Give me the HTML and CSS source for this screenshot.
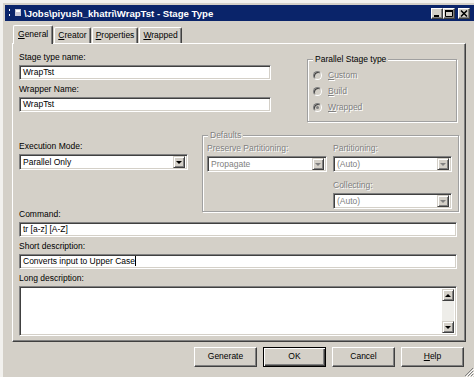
FILE: index.html
```html
<!DOCTYPE html>
<html lang="en">
<head>
    <meta charset="UTF-8">
    <meta name="viewport" content="width=device-width, initial-scale=1.0">
    <title>Stage Type</title>
    <link rel="stylesheet" href="styles.css">
</head>
<body>
<div class="window">
    <div class="titlebar">
        <svg class="app-icon" width="13" height="10" viewBox="0 0 13 10">
            <rect x="1" y="1" width="1" height="2" fill="#fff"/>
            <rect x="1" y="6" width="1" height="2" fill="#fff"/>
            <rect x="7" y="1" width="6" height="7" fill="#c8c8d8"/>
            <rect x="8" y="2" width="4" height="2" fill="#fff"/>
        </svg>
        <span class="title">\Jobs\piyush_khatri\WrapTst - Stage Type</span>
        <div class="caption-buttons">
            <span class="cap-btn">
                <svg width="10" height="9" viewBox="0 0 10 9"><rect x="2" y="6" width="5" height="2" fill="#000"/></svg>
            </span>
            <span class="cap-btn">
                <svg width="10" height="9" viewBox="0 0 10 9"><path d="M1.5 1.5h7v6h-7z" fill="none" stroke="#000"/><rect x="1" y="1" width="8" height="2" fill="#000"/></svg>
            </span>
            <span class="cap-btn close">
                <svg width="10" height="9" viewBox="0 0 10 9"><path d="M2 1.5l6 6M8 1.5l-6 6" stroke="#000" stroke-width="1.6"/></svg>
            </span>
        </div>
    </div>

    <div class="dialog">
        <div class="tabs">
            <div class="tab active"><u>G</u>eneral</div>
            <div class="tab"><u>C</u>reator</div>
            <div class="tab"><u>P</u>roperties</div>
            <div class="tab"><u>W</u>rapped</div>
        </div>

        <div class="panel">
            <div class="top-row">
                <div class="names">
                    <div class="label">Stage type name:</div>
                    <div class="field">WrapTst</div>
                    <div class="label">Wrapper Name:</div>
                    <div class="field">WrapTst</div>
                </div>
                <div class="group stage-type">
                    <span class="legend">Parallel Stage type</span>
                    <div class="radio"><span class="mark"></span><span class="off"><u>C</u>ustom</span></div>
                    <div class="radio"><span class="mark"></span><span class="off"><u>B</u>uild</span></div>
                    <div class="radio"><span class="mark checked"></span><span class="off"><u>W</u>rapped</span></div>
                </div>
            </div>

            <div class="mid-row">
                <div class="exec">
                    <div class="label">Execution Mode:</div>
                    <div class="select">
                        <span class="value">Parallel Only</span>
                        <span class="drop"></span>
                    </div>
                </div>
                <div class="group defaults">
                    <span class="legend off">Defaults</span>
                    <div class="defaults-grid">
                        <div>
                            <div class="label off">Preserve Partitioning:</div>
                            <div class="select disabled">
                                <span class="value">Propagate</span>
                                <span class="drop"></span>
                            </div>
                        </div>
                        <div>
                            <div class="label off">Partitioning:</div>
                            <div class="select disabled">
                                <span class="value">(Auto)</span>
                                <span class="drop"></span>
                            </div>
                        </div>
                        <div></div>
                        <div>
                            <div class="label off">Collecting:</div>
                            <div class="select disabled">
                                <span class="value">(Auto)</span>
                                <span class="drop"></span>
                            </div>
                        </div>
                    </div>
                </div>
            </div>

            <div class="label cmd-label">Command:</div>
            <div class="field">tr [a-z] [A-Z]</div>
            <div class="label">Short description:</div>
            <div class="field">Converts input to Upper Case<span class="caret"></span></div>
            <div class="label">Long description:</div>
            <div class="textarea">
                <div class="scrollbar">
                    <span class="sb-btn up"></span>
                    <span class="sb-track"></span>
                    <span class="sb-btn down"></span>
                </div>
            </div>
        </div>

        <div class="buttons">
            <div class="btn">Generate</div>
            <div class="btn default">OK</div>
            <div class="btn">Cancel</div>
            <div class="btn"><u>H</u>elp</div>
        </div>
    </div>

    <svg class="grip" width="10" height="10" viewBox="0 0 10 10">
        <path d="M9 1L1 9M9 4L4 9M9 7L7 9" stroke="#808080" stroke-width="1"/>
        <path d="M10 2L2 10M10 5L5 10M10 8L8 10" stroke="#fff" stroke-width="1"/>
    </svg>
</div>
</body>
</html>
```

FILE: styles.css
```css
html, body {
    margin: 0;
    height: 100%;
}
body {
    background: #d4d0c8;
    font-family: "Liberation Sans", Arial, sans-serif;
    font-size: 8.5px;
    color: #000;
    overflow: hidden;
}
u {
    text-decoration: underline;
    text-underline-offset: 1px;
}
.window {
    position: relative;
    height: 100%;
    box-sizing: border-box;
    border-left: 3px solid #f2f1ee;
    border-top: 3px solid #f2f1ee;
    padding: 2px 0 0 2px;
}

/* title bar */
.titlebar {
    height: 16px;
    background: #0a246a;
    display: flex;
    align-items: center;
    padding-left: 3px;
}
.app-icon {
    margin-right: 3px;
}
.title {
    color: #fff;
    font-weight: bold;
    font-size: 9.6px;
    white-space: nowrap;
}
.caption-buttons {
    margin-left: auto;
    display: flex;
    margin-right: 4px;
}
.cap-btn {
    width: 12px;
    height: 11px;
    box-sizing: border-box;
    background: #d4d0c8;
    border: 1px solid;
    border-color: #fff #404040 #404040 #fff;
    box-shadow: inset -1px -1px 0 #808080;
    display: flex;
    align-items: center;
    justify-content: center;
}
.cap-btn svg {
    display: block;
}
.cap-btn.close {
    margin-left: 3px;
}

/* dialog body */
.dialog {
    padding: 4px 8px 0 7px;
}
.tabs {
    display: flex;
    align-items: flex-end;
    height: 18px;
    padding-left: 1px;
    position: relative;
    z-index: 1;
}
.tab {
    height: 16px;
    box-sizing: border-box;
    padding: 0 3px;
    line-height: 14px;
    border: 1px solid;
    border-color: #fff #404040 transparent #fff;
    border-bottom: none;
    box-shadow: inset -1px 0 0 #808080;
    border-radius: 2px 2px 0 0;
    margin-left: 1px;
    white-space: nowrap;
}
.tab.active {
    height: 19px;
    margin-bottom: -1px;
    margin-left: 0;
    padding: 0 4px;
    background: #d4d0c8;
    line-height: 16px;
}
.panel {
    border: 1px solid;
    border-color: #fff #404040 #404040 #fff;
    box-shadow: inset -1px -1px 0 #808080;
    padding: 8px 8px 5px 6px;
}

.label {
    line-height: 11px;
    height: 11px;
    margin-bottom: 2px;
    white-space: nowrap;
}
.off {
    color: #808080;
    text-shadow: 1px 1px 0 #fff;
}

.field,
.select,
.textarea {
    box-sizing: border-box;
    background: #fff;
    border: 1px solid;
    border-color: #808080 #fff #fff #808080;
    box-shadow: inset 1px 1px 0 #404040, inset -1px -1px 0 #d4d0c8;
}
.field {
    height: 15px;
    line-height: 13px;
    padding-left: 3px;
    margin-bottom: 4px;
    white-space: nowrap;
}
.caret {
    display: inline-block;
    width: 1px;
    height: 10px;
    background: #000;
    vertical-align: -2px;
}

.top-row {
    display: flex;
    align-items: flex-start;
}
.names {
    width: 252px;
}
.group {
    position: relative;
    box-sizing: border-box;
    border: 1px solid #a0a0a0;
    box-shadow: 1px 1px 0 #fff, inset 1px 1px 0 #fff;
}
.legend {
    position: absolute;
    top: -6px;
    left: 5px;
    padding: 0 2px;
    line-height: 11px;
    background: #d4d0c8;
    white-space: nowrap;
}
.stage-type {
    margin-left: 36px;
    margin-top: 7px;
    width: 150px;
    height: 63px;
    padding: 7px 0 0 5px;
}
.radio {
    height: 16px;
    display: flex;
    align-items: center;
}
.mark {
    width: 9px;
    height: 9px;
    box-sizing: border-box;
    border-radius: 50%;
    border: 1px solid;
    border-color: #808080 #fff #fff #808080;
    box-shadow: inset 1px 1px 0 #404040;
    background: #d4d0c8;
    margin-right: 6px;
    position: relative;
}
.mark.checked::after {
    content: "";
    position: absolute;
    left: 2px;
    top: 2px;
    width: 3px;
    height: 3px;
    border-radius: 50%;
    background: #808080;
}

.mid-row {
    display: flex;
    align-items: flex-start;
    margin-top: 13px;
}
.exec {
    width: 169px;
    padding-top: 6px;
}
.select {
    height: 16px;
    display: flex;
    padding: 2px 2px 2px 2px;
}
.select .value {
    flex: 1;
    line-height: 11px;
    padding-left: 1px;
    white-space: nowrap;
}
.select.disabled .value {
    color: #808080;
}
.drop {
    width: 12px;
    height: 12px;
    margin-top: -1px;
    box-sizing: border-box;
    background: #d4d0c8;
    border: 1px solid;
    border-color: #d4d0c8 #404040 #404040 #d4d0c8;
    box-shadow: inset 1px 1px 0 #fff, inset -1px -1px 0 #808080;
    display: flex;
    align-items: center;
    justify-content: center;
}
.drop::after {
    content: "";
    border-left: 3px solid transparent;
    border-right: 3px solid transparent;
    border-top: 3px solid #000;
}
.select.disabled .drop::after {
    border-top-color: #808080;
}
.defaults {
    margin-left: 14px;
    margin-right: -2px;
    width: 257px;
    height: 77px;
    padding: 7px 0 0 4px;
}
.defaults-grid {
    display: grid;
    grid-template-columns: 120px 119px;
    column-gap: 6px;
    row-gap: 8px;
}
.defaults-grid .label {
    margin-bottom: 2px;
}

.cmd-label {
    margin-top: -3px;
}
.textarea {
    height: 50px;
    display: flex;
    justify-content: flex-end;
    padding: 2px;
}
.scrollbar {
    width: 12px;
    display: flex;
    flex-direction: column;
}
.sb-track {
    flex: 1;
    background: #eeede9;
}
.sb-btn {
    height: 12px;
    box-sizing: border-box;
    background: #d4d0c8;
    border: 1px solid;
    border-color: #d4d0c8 #404040 #404040 #d4d0c8;
    box-shadow: inset 1px 1px 0 #fff, inset -1px -1px 0 #808080;
    display: flex;
    align-items: center;
    justify-content: center;
}
.sb-btn::after {
    content: "";
    border-left: 3px solid transparent;
    border-right: 3px solid transparent;
}
.sb-btn.up::after {
    border-bottom: 3px solid #000;
}
.sb-btn.down::after {
    border-top: 3px solid #000;
}

/* bottom buttons */
.buttons {
    display: flex;
    justify-content: flex-end;
    gap: 6px;
    margin-top: 5px;
    padding-right: 2px;
}
.btn {
    width: 63px;
    height: 20px;
    box-sizing: border-box;
    border: 1px solid;
    border-color: #fff #404040 #404040 #fff;
    box-shadow: inset -1px -1px 0 #808080;
    text-align: center;
    line-height: 17px;
}
.btn.default {
    border: 1px solid #000;
    box-shadow: inset 1px 1px 0 #fff, inset -1px -1px 0 #404040, inset -2px -2px 0 #808080;
}
.grip {
    position: absolute;
    right: 0;
    bottom: 0;
}
```
